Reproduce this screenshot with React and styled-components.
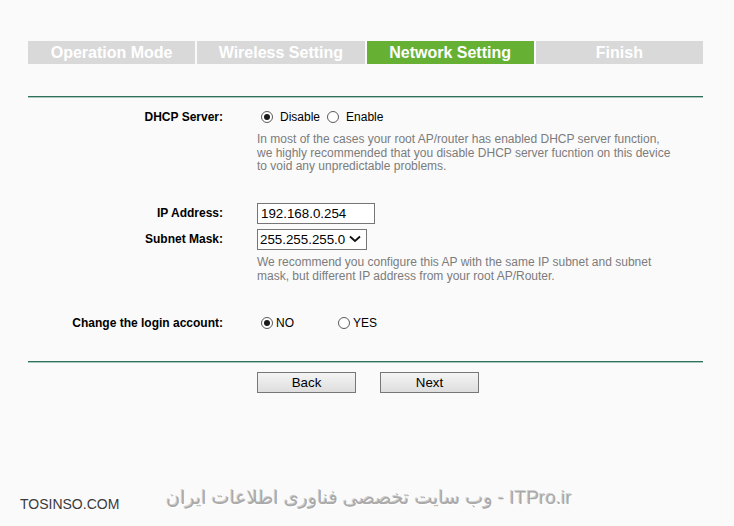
import React from 'react';
import styled, { createGlobalStyle } from 'styled-components';

const GlobalStyle = createGlobalStyle`
  html, body {
    margin: 0;
    padding: 0;
    background: #fafafa;
  }
  body {
    font-family: "Liberation Sans", Arial, sans-serif;
    color: #000;
  }
`;

const Page = styled.div`
  min-height: 526px;
  display: flex;
  flex-direction: column;
  box-sizing: border-box;
`;

const Wizard = styled.div`
  width: 675px;
  margin: 41px 0 0 28px;
`;

const Steps = styled.div`
  display: flex;
  gap: 2px;
`;

const Step = styled.div`
  flex: 1;
  height: 23px;
  line-height: 23px;
  text-align: center;
  font-size: 16px;
  font-weight: bold;
  color: #fff;
  background: ${({ active }) => (active ? '#66b133' : '#d9d9d9')};
`;

const Rule = styled.div`
  height: 1px;
  background: #2f6f5c;
  border-bottom: 1px solid #a9cbbf;
  margin-top: ${({ top }) => top}px;
`;

const Row = styled.div`
  display: flex;
  align-items: center;
  margin-top: ${({ gap }) => gap || 0}px;
`;

const Label = styled.div`
  width: 195px;
  flex: none;
  text-align: right;
  font-size: 12px;
  font-weight: bold;
  line-height: 16px;
`;

const Field = styled.div`
  margin-left: 34px;
  display: flex;
  align-items: center;
  font-size: 12px;
  line-height: 16px;
`;

const Hint = styled.div`
  margin-left: 229px;
  margin-top: ${({ gap }) => gap}px;
  font-size: 12px;
  line-height: ${({ lh }) => lh || 13.5}px;
  color: #7c7c7c;
`;

const RadioOpt = styled.label`
  display: inline-flex;
  align-items: center;
  margin-left: ${({ ml }) => ml || 0}px;
  gap: ${({ space }) => space}px;
`;

const Dot = styled.span`
  width: 12px;
  height: 12px;
  box-sizing: border-box;
  border: 1px solid #5a5a5a;
  border-radius: 50%;
  background: #fff;
  display: inline-flex;
  align-items: center;
  justify-content: center;
  margin-left: 4px;

  &::after {
    content: '';
    width: 6px;
    height: 6px;
    border-radius: 50%;
    background: ${({ checked }) => (checked ? '#1a1a1a' : 'transparent')};
  }
`;

const TextBox = styled.div`
  width: 118px;
  height: 21px;
  box-sizing: border-box;
  border: 1px solid #767676;
  background: #fff;
  padding-left: 3px;
  font-size: 13.33px;
  line-height: 19px;
`;

const Select = styled.div`
  width: 110px;
  height: 21px;
  box-sizing: border-box;
  border: 1px solid #767676;
  background: #fff;
  padding-left: 2px;
  font-size: 13.33px;
  line-height: 19px;
  display: flex;
  align-items: center;
  gap: 4px;
`;

const Buttons = styled.div`
  display: flex;
  gap: 24px;
  margin: 9px 0 0 229px;
`;

const Button = styled.button`
  width: 99px;
  height: 21px;
  padding: 0;
  border: 1px solid #777;
  background: linear-gradient(#f4f4f4, #dedede);
  font-family: "Liberation Sans", Arial, sans-serif;
  font-size: 13.33px;
  color: #000;
`;

const Footer = styled.div`
  margin-top: auto;
  display: flex;
  align-items: center;
  padding: 0 0 14px 20px;
`;

const Brand = styled.div`
  font-size: 14px;
  color: #3a3a3a;
  margin-top: 14px;
`;

const Watermark = styled.div`
  margin-left: 47px;
  direction: rtl;
  font-family: "Liberation Sans", "DejaVu Sans", sans-serif;
  font-size: 19px;
  color: #a9a9a9;
  text-shadow: 1px 1px 0 #fff, -1px -1px 0 #cfcfcf;
`;

export default function App() {
  return (
    <Page>
      <GlobalStyle />
      <Wizard>
        <Steps>
          <Step>Operation Mode</Step>
          <Step>Wireless Setting</Step>
          <Step active>Network Setting</Step>
          <Step>Finish</Step>
        </Steps>

        <Rule top={32} />

        <Row gap={11}>
          <Label>DHCP Server:</Label>
          <Field>
            <RadioOpt space={7}>
              <Dot checked />
              Disable
            </RadioOpt>
            <RadioOpt space={7} ml={3}>
              <Dot />
              Enable
            </RadioOpt>
          </Field>
        </Row>
        <Hint gap={8}>
          In most of the cases your root AP/router has enabled DHCP server function,
          <br />
          we highly recommended that you disable DHCP server fucntion on this device
          <br />
          to void any unpredictable problems.
        </Hint>

        <Row gap={29}>
          <Label>IP Address:</Label>
          <Field>
            <TextBox>192.168.0.254</TextBox>
          </Field>
        </Row>
        <Row gap={5}>
          <Label>Subnet Mask:</Label>
          <Field>
            <Select>
              255.255.255.0
              <svg width="12" height="8" viewBox="0 0 12 8">
                <path d="M1 1.5 L6 6 L11 1.5" fill="none" stroke="#111" strokeWidth="1.8" />
              </svg>
            </Select>
          </Field>
        </Row>
        <Hint gap={5} lh={14}>
          We recommend you configure this AP with the same IP subnet and subnet
          <br />
          mask, but different IP address from your root AP/Router.
        </Hint>

        <Row gap={32}>
          <Label>Change the login account:</Label>
          <Field>
            <RadioOpt space={3}>
              <Dot checked />
              NO
            </RadioOpt>
            <RadioOpt space={3} ml={40}>
              <Dot />
              YES
            </RadioOpt>
          </Field>
        </Row>

        <Rule top={30} />

        <Buttons>
          <Button>Back</Button>
          <Button>Next</Button>
        </Buttons>
      </Wizard>

      <Footer>
        <Brand>TOSINSO.COM</Brand>
        <Watermark>ITPro.ir - وب سایت تخصصی فناوری اطلاعات ایران</Watermark>
      </Footer>
    </Page>
  );
}
